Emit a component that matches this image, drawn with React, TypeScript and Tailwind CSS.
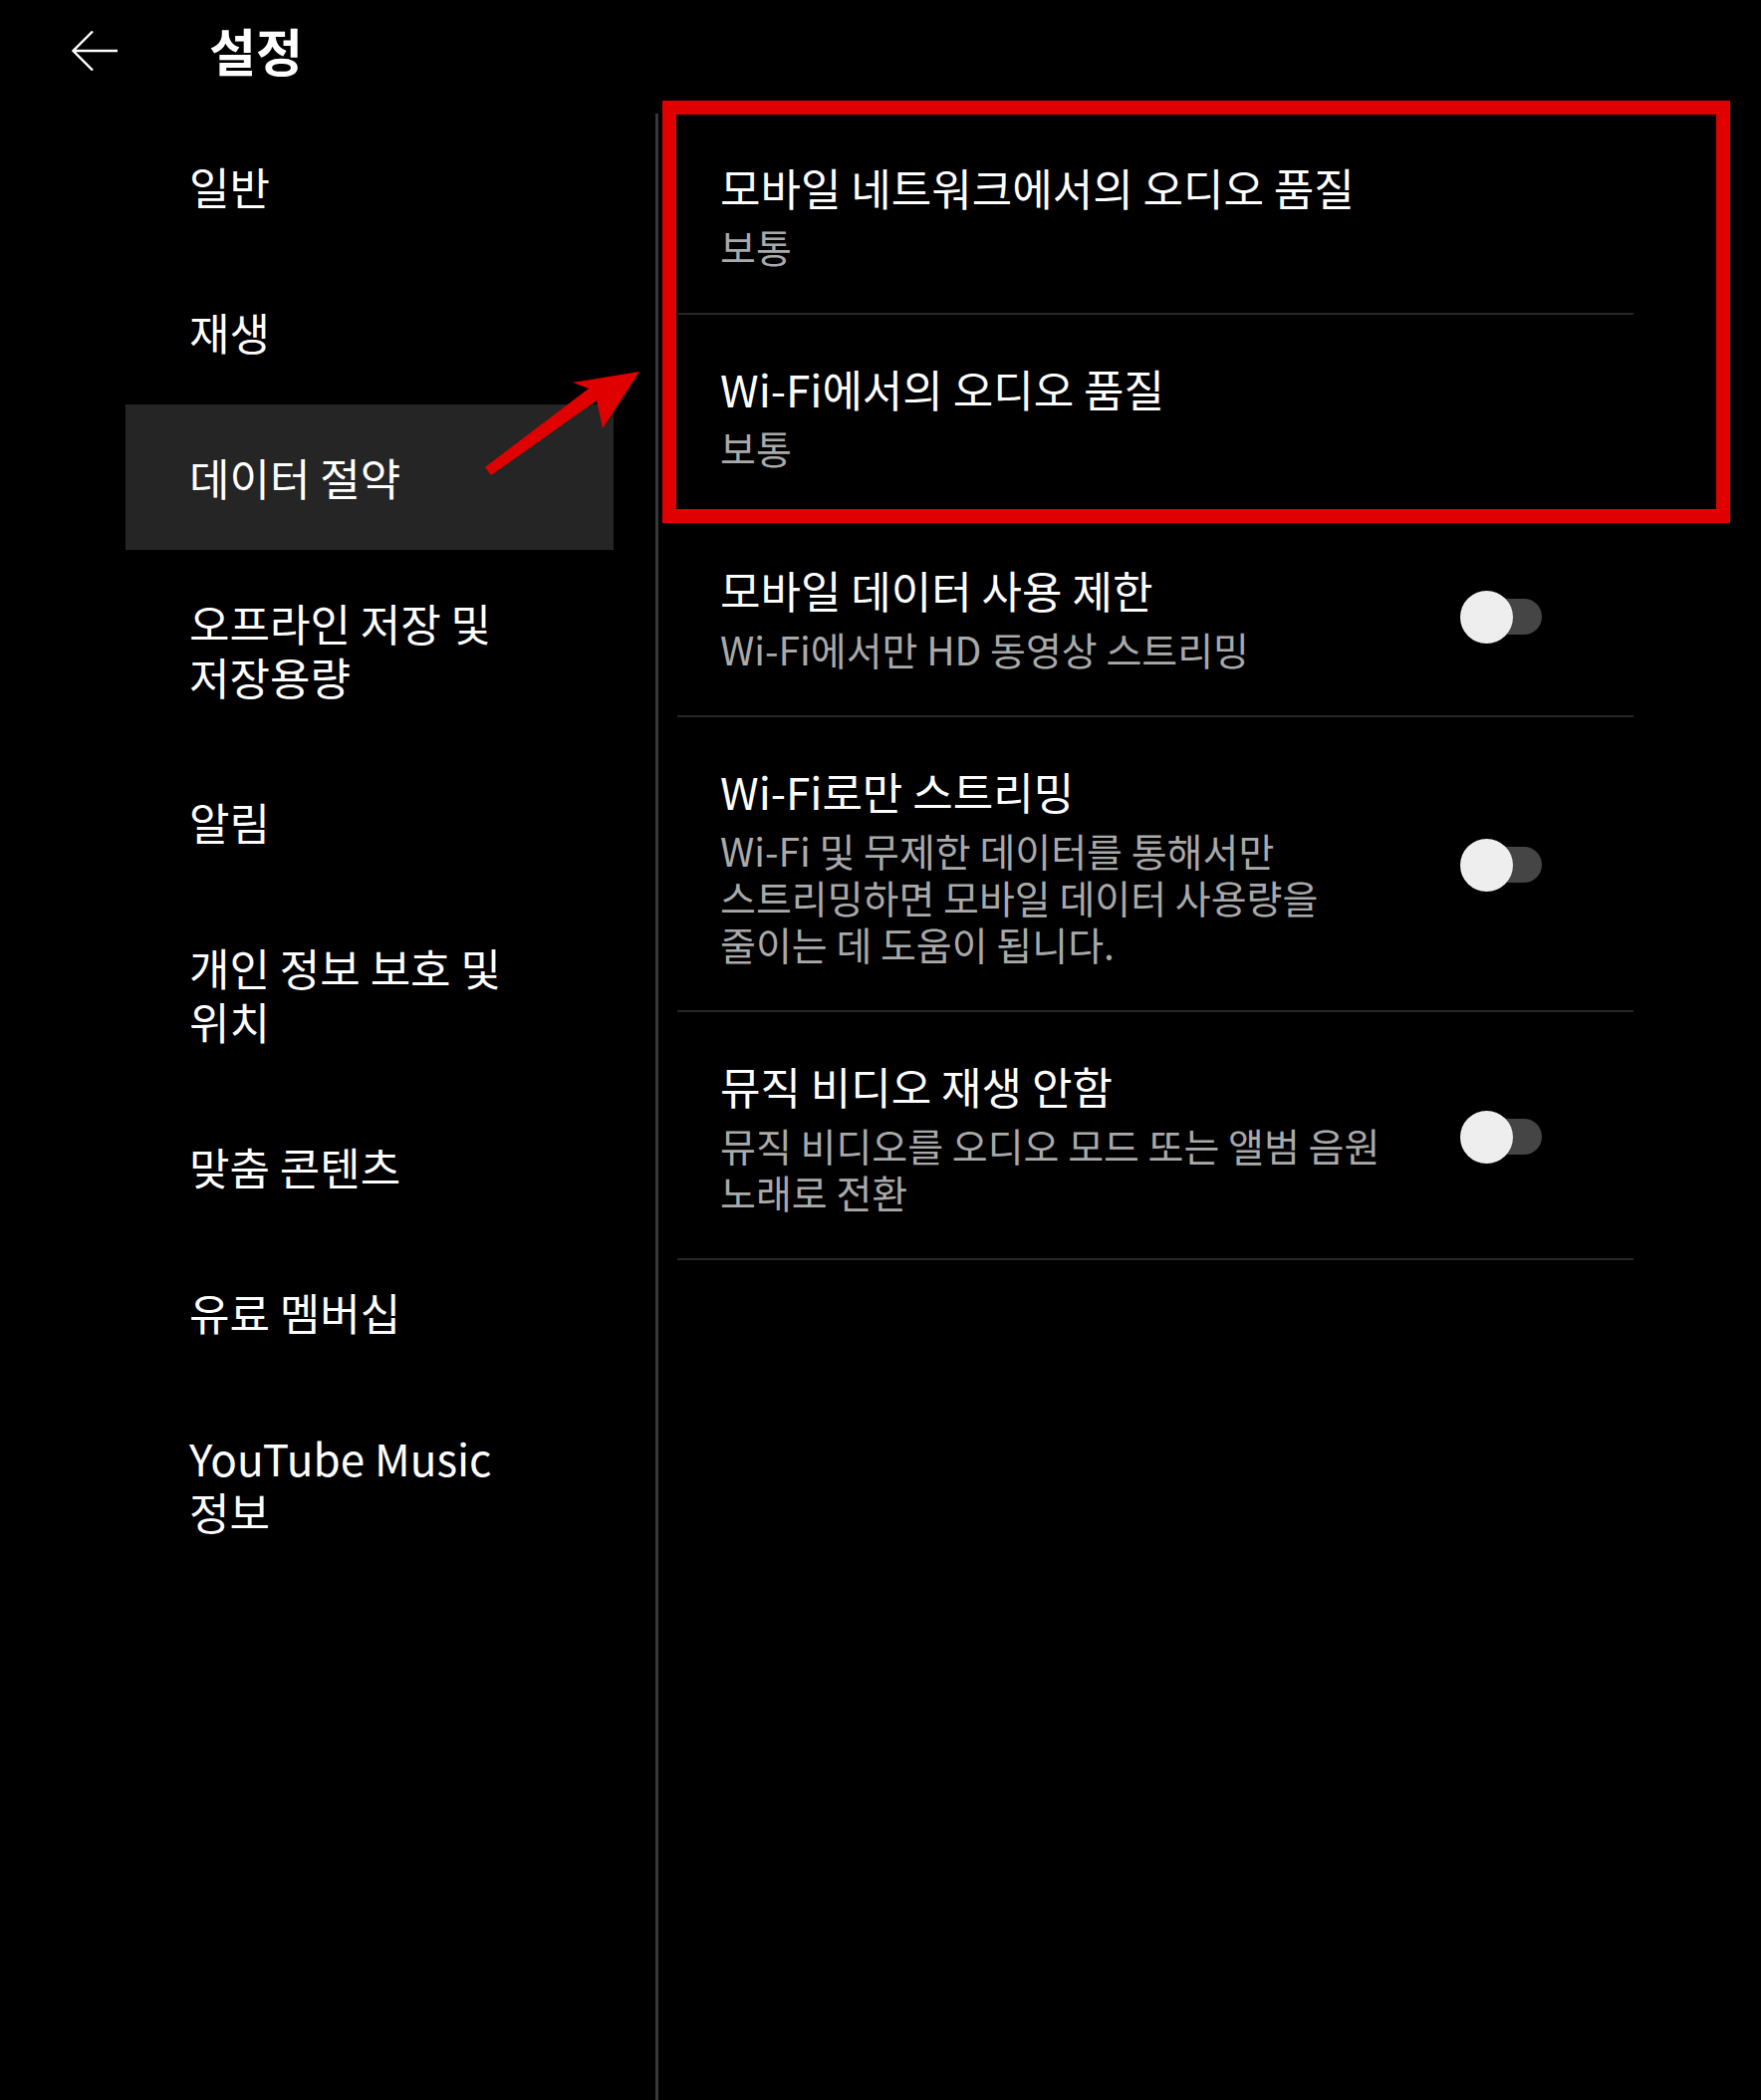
import React from 'react'

const menu: { label: string[]; active?: boolean }[] = [
  { label: ['일반'] },
  { label: ['재생'] },
  { label: ['데이터 절약'], active: true },
  { label: ['오프라인 저장 및', '저장용량'] },
  { label: ['알림'] },
  { label: ['개인 정보 보호 및', '위치'] },
  { label: ['맞춤 콘텐츠'] },
  { label: ['유료 멤버십'] },
  { label: ['YouTube Music', '정보'] },
]

const settings: { title: string; lines: string[]; toggle?: boolean }[] = [
  { title: '모바일 네트워크에서의 오디오 품질', lines: ['보통'] },
  { title: 'Wi-Fi에서의 오디오 품질', lines: ['보통'] },
  { title: '모바일 데이터 사용 제한', lines: ['Wi-Fi에서만 HD 동영상 스트리밍'], toggle: true },
  {
    title: 'Wi-Fi로만 스트리밍',
    lines: ['Wi-Fi 및 무제한 데이터를 통해서만', '스트리밍하면 모바일 데이터 사용량을', '줄이는 데 도움이 됩니다.'],
    toggle: true,
  },
  {
    title: '뮤직 비디오 재생 안함',
    lines: ['뮤직 비디오를 오디오 모드 또는 앨범 음원', '노래로 전환'],
    toggle: true,
  },
]

function Toggle() {
  return (
    <div className="relative h-[53px] w-[82px] shrink-0">
      <div className="absolute right-0 top-[8px] h-[36px] w-[70px] rounded-full bg-[#454545]" />
      <div className="absolute left-0 top-0 h-[53px] w-[53px] rounded-full bg-[#eeeeee]" />
    </div>
  )
}

export default function App() {
  return (
    <div
      className="relative h-[2108px] w-[1768px] overflow-hidden bg-black text-white"
      style={{ fontFamily: '"Noto Sans CJK KR", "Noto Sans", sans-serif' }}
    >
      {/* header */}
      <header className="flex h-[114px] items-center pb-[13px]">
        <svg className="ml-[72px] h-[40px] w-[47px]" viewBox="0 0 47 40" fill="none">
          <path d="M46 20H1.5M21 0.5L1.5 20L21 39.5" stroke="#ffffff" strokeWidth="2.4" />
        </svg>
        <h1 className="ml-[91px] text-[51px] font-bold leading-none">설정</h1>
      </header>

      <div className="flex">
        {/* sidebar */}
        <nav className="w-[658px] shrink-0 pl-[126px] pr-[42px]">
          {menu.map((m) => (
            <div
              key={m.label.join()}
              className={`flex items-center pl-[64px] text-[44px] leading-[54px] ${
                m.label.length > 1 ? 'h-[200px]' : 'h-[146px]'
              } ${m.active ? 'bg-[#252525]' : ''}`}
            >
              <div>
                {m.label.map((l) => (
                  <div key={l} className="whitespace-nowrap">
                    {l}
                  </div>
                ))}
              </div>
            </div>
          ))}
        </nav>

        {/* content */}
        <main className="min-h-[1994px] flex-1 border-l-[3px] border-[#383838]">
          <div className="ml-[19px] w-[960px]">
            {settings.map((s) => (
              <div
                key={s.title}
                className="flex items-center border-b-2 border-[#272727] pb-[43px] pl-[43px] pr-[92px] pt-[46px]"
              >
                <div className="flex-1">
                  <div className="whitespace-nowrap text-[44px] leading-[56px] text-white">{s.title}</div>
                  <div className="mt-[8px] text-[39px] leading-[47px] text-[#a9a9a9]">
                    {s.lines.map((l) => (
                      <div key={l} className="whitespace-nowrap">
                        {l}
                      </div>
                    ))}
                  </div>
                </div>
                {s.toggle && <Toggle />}
              </div>
            ))}
          </div>
        </main>
      </div>

      {/* annotation: red box + arrow */}
      <div className="pointer-events-none absolute left-[665px] top-[101px] h-[424px] w-[1072px] border-[14px] border-[#e00000]" />
      <svg className="pointer-events-none absolute left-0 top-0" width="1768" height="2108" viewBox="0 0 1768 2108">
        <polygon
          points="487,469 591,390 575,384 642,373 605,430 599,402 493,477"
          fill="#e00000"
        />
      </svg>
    </div>
  )
}
